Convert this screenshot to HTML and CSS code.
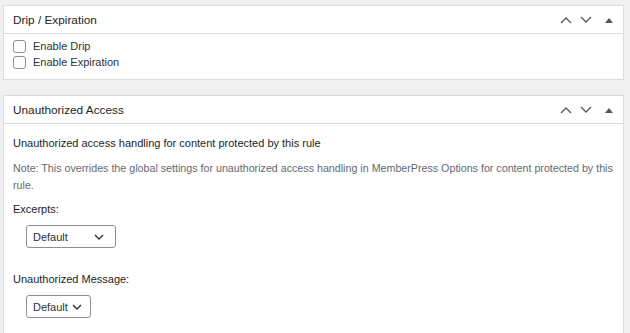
FILE: index.html
```html
<!DOCTYPE html>
<html lang="en">
<head>
  <meta charset="UTF-8">
  <title>Rule Options</title>
  <link rel="stylesheet" href="styles.css">
</head>
<body>
  <div class="postbox">
    <div class="postbox-header">
      <h2>Drip / Expiration</h2>
      <div class="handle-actions">
        <svg class="arrow" width="14" height="10" viewBox="0 0 14 10"><path d="M2 8 L7 3 L12 8" fill="none" stroke="#50575e" stroke-width="1.3"/></svg>
        <svg class="arrow" width="14" height="10" viewBox="0 0 14 10"><path d="M2 2 L7 7 L12 2" fill="none" stroke="#50575e" stroke-width="1.3"/></svg>
        <svg class="toggle" width="8" height="6" viewBox="0 0 8 6"><path d="M0 6 L4 1 L8 6 Z" fill="#50575e"/></svg>
      </div>
    </div>
    <div class="inside drip">
      <label class="check"><span class="box"></span>Enable Drip</label>
      <label class="check"><span class="box"></span>Enable Expiration</label>
    </div>
  </div>

  <div class="postbox">
    <div class="postbox-header">
      <h2>Unauthorized Access</h2>
      <div class="handle-actions">
        <svg class="arrow" width="14" height="10" viewBox="0 0 14 10"><path d="M2 8 L7 3 L12 8" fill="none" stroke="#50575e" stroke-width="1.3"/></svg>
        <svg class="arrow" width="14" height="10" viewBox="0 0 14 10"><path d="M2 2 L7 7 L12 2" fill="none" stroke="#50575e" stroke-width="1.3"/></svg>
        <svg class="toggle" width="8" height="6" viewBox="0 0 8 6"><path d="M0 6 L4 1 L8 6 Z" fill="#50575e"/></svg>
      </div>
    </div>
    <div class="inside">
      <p class="lead">Unauthorized access handling for content protected by this rule</p>
      <p class="note">Note: This overrides the global settings for unauthorized access handling in MemberPress Options for content protected by this rule.</p>
      <p class="field-label">Excerpts:</p>
      <div class="select wide">Default
        <svg width="10" height="6" viewBox="0 0 10 6"><path d="M1 1 L5 5 L9 1" fill="none" stroke="#2c3338" stroke-width="1.4"/></svg>
      </div>
      <p class="field-label">Unauthorized Message:</p>
      <div class="select">Default
        <svg width="10" height="6" viewBox="0 0 10 6"><path d="M1 1 L5 5 L9 1" fill="none" stroke="#2c3338" stroke-width="1.4"/></svg>
      </div>
    </div>
  </div>
</body>
</html>
```

FILE: styles.css
```css
body {
  margin: 0;
  padding: 5px 6px 0 3px;
  background-color: #f0f0f1;
  font-family: "Liberation Sans", Arial, sans-serif;
  font-size: 11px;
  color: #1d2327;
}

.postbox {
  background: #fff;
  border: 1px solid #dcdcde;
  margin-bottom: 15px;
}

.postbox-header {
  display: flex;
  align-items: center;
  justify-content: space-between;
  height: 27px;
  border-bottom: 1px solid #dcdcde;
}

.postbox-header h2 {
  margin: 0 0 0 9px;
  font-size: 11.8px;
  font-weight: normal;
}

.handle-actions {
  display: flex;
  align-items: center;
  padding-right: 10px;
}

.arrow {
  margin-left: 6px;
}

.toggle {
  margin-left: 12px;
}

.inside.drip {
  padding: 4px 9px 9px;
}

.check {
  display: flex;
  align-items: center;
  height: 16px;
  color: #2c3338;
}

.box {
  width: 11px;
  height: 11px;
  border: 1px solid #8c8f94;
  border-radius: 3px;
  margin-right: 7px;
}

.inside {
  padding: 0 9px 10px;
}

.inside p {
  margin: 0;
}

.lead {
  padding-top: 13px;
}

.note {
  margin-top: 11px !important;
  color: #646970;
  font-size: 10.7px;
  line-height: 17px;
}

.field-label {
  margin-top: 9px !important;
}

.select {
  display: flex;
  align-items: center;
  justify-content: space-between;
  box-sizing: border-box;
  width: 65px;
  height: 23px;
  margin: 10px 0 25px 13px;
  padding: 0 8px 0 6px;
  border: 1px solid #8c8f94;
  border-radius: 3px;
  color: #2c3338;
}

.select.wide {
  width: 90px;
  padding-right: 11px;
}
```
